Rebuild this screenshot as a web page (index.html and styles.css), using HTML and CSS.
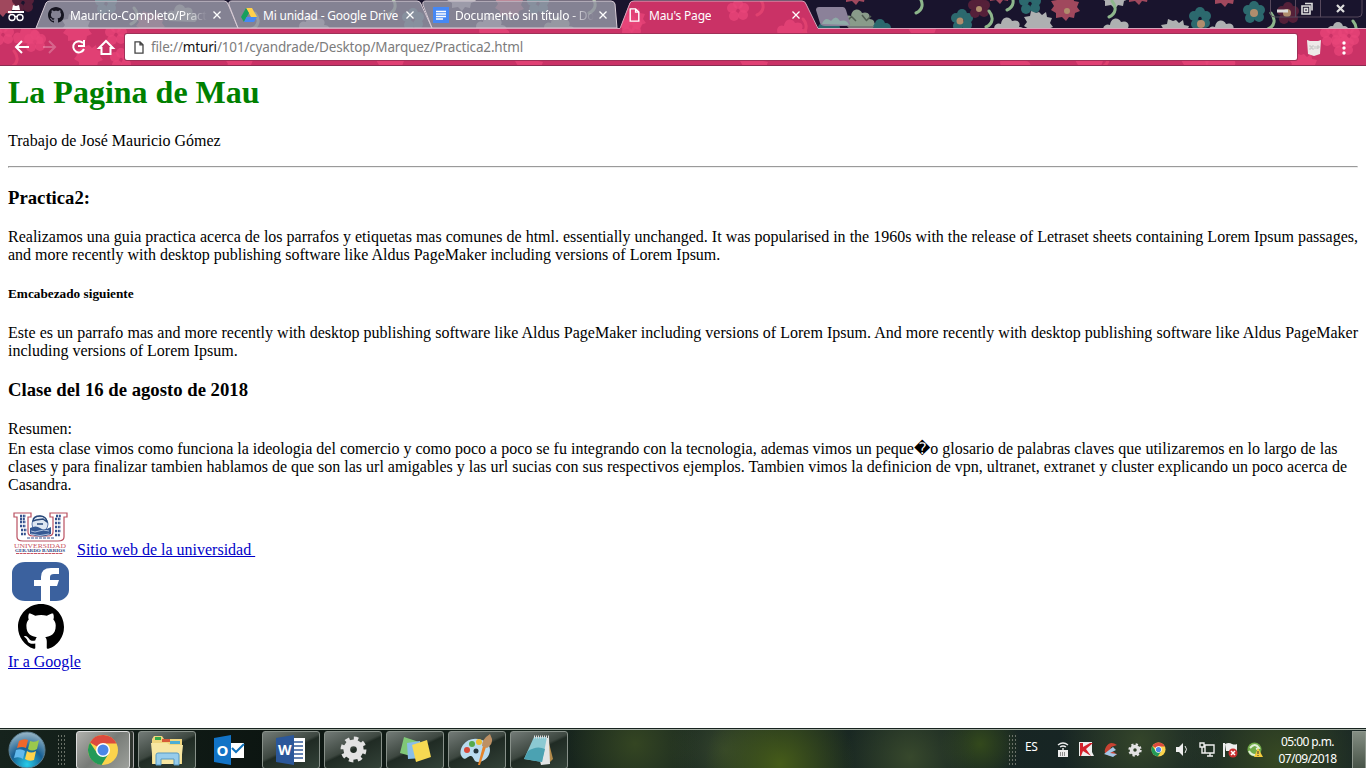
FILE: index.html
```html
<!DOCTYPE html>
<html lang="es">
<head>
<meta charset="utf-8">
<title>Mau's Page</title>
<link rel="stylesheet" href="styles.css">
</head>
<body>
<svg class="defs" aria-hidden="true">
  <defs>
    <symbol id="octocat" viewBox="0 0 16 16"><path d="M8 0C3.58 0 0 3.58 0 8c0 3.54 2.29 6.53 5.47 7.59.4.07.55-.17.55-.38 0-.19-.01-.82-.01-1.49-2.01.37-2.53-.49-2.69-.94-.09-.23-.48-.94-.82-1.13-.28-.15-.68-.52-.01-.53.63-.01 1.08.58 1.23.82.72 1.21 1.87.87 2.33.66.07-.52.28-.87.51-1.07-1.78-.2-3.64-.89-3.64-3.95 0-.87.31-1.59.82-2.15-.08-.2-.36-1.02.08-2.12 0 0 .67-.21 2.2.82.64-.18 1.32-.27 2-.27s1.36.09 2 .27c1.53-1.04 2.2-.82 2.2-.82.44 1.1.16 1.92.08 2.12.51.56.82 1.27.82 2.15 0 3.07-1.87 3.75-3.65 3.95.29.25.54.73.54 1.48 0 1.07-.01 1.93-.01 2.2 0 .21.15.46.55.38A8.01 8.01 0 0 0 16 8c0-4.42-3.58-8-8-8z"/></symbol>
    <symbol id="chrome" viewBox="0 0 32 32">
      <circle cx="16" cy="16" r="15" fill="#fbd34c"/>
      <path d="M16 16 3 8.5A15 15 0 0 1 29.5 9.500H16z" fill="#dc4b3e"/>
      <path d="M3 8.500 A15 15 0 0 0 14.500 31 L22 19 16 16 10 19z" fill="#239a58"/>
      <circle cx="16" cy="16" r="7" fill="#fff"/><circle cx="16" cy="16" r="5.500" fill="#4a86e8"/>
    </symbol>
    <symbol id="close" viewBox="0 0 8 8"><path d="M.5.5l7 7m0-7l-7 7" stroke="#fff" stroke-width="1.300"/></symbol>
    <symbol id="gear" viewBox="-12 -12 24 24"><circle r="6" fill="none" stroke="#e2e2e2" stroke-width="6"/><circle r="9.500" fill="none" stroke="#e2e2e2" stroke-width="4" stroke-dasharray="3.800 3.660"/></symbol>
    <symbol id="page" viewBox="0 0 10 13"><path d="M1 .8h5l3 3v8.400H1zM6 .8v3h3" fill="none" stroke="currentColor" stroke-width="1.300"/></symbol>
    <g id="bloom"><circle cx="-6" cy="-3" r="5"/><circle cx="0" cy="-7" r="5"/><circle cx="6" cy="-3" r="5"/><circle cx="5" cy="4" r="5"/><circle cx="-4" cy="5" r="5"/></g>
    <path id="daisy" d="M0-12l3 3 4-3 1 5 5 1-2 5 3 4-5 2-1 5-5-1-3 4-4-4-6 1v-5l-5-3 3-4-3-5 6-1 1-5 5 2z"/>
    <path id="cap" d="M-14 8c-5-8 1-12 5-10 1-8 9-8 11-3 6-2 9 2 7 6 6 0 7 5 3 8z"/>
    <path id="stem" d="M0-8C5-2 4 5-3 8" fill="none" stroke-width="3" stroke-linecap="round"/>
    <clipPath id="toolClip"><path d="M0 29H620L630 2q1-1 3-1H802q3 0 4 3L818 29H1366V65H0z"/></clipPath>
    <clipPath id="topClip"><path d="M0 0H1366V28H0z"/></clipPath>
  </defs>
</svg>

<header class="browser">
  <svg class="theme" width="1366" height="66" viewBox="0 0 1366 66">
    <path fill="#19142d" d="M0 0h1366v66H0z"/>
    <g clip-path="url(#topClip)">
      <g fill="#a0485d"><use href="#daisy" x="3" y="4"/><use href="#daisy" x="151" y="24"/><use href="#daisy" x="510" y="6"/><use href="#daisy" x="1066" y="8"/><use href="#daisy" x="1139" y="-8"/><use href="#daisy" x="856" y="-8"/><use href="#daisy" x="1000" y="-9"/><use href="#daisy" x="1225" y="-6"/></g>
      <g fill="#2c696e"><use href="#bloom" x="106" y="4"/><use href="#bloom" x="413" y="20"/><use href="#bloom" x="538" y="4"/><use href="#bloom" x="962" y="21"/><use href="#bloom" x="1200" y="19"/><use href="#bloom" x="1254" y="13"/><use href="#bloom" x="880" y="31"/><use href="#bloom" x="829" y="31"/><use href="#bloom" x="1030" y="4"/></g>
      <g fill="#552039"><use href="#bloom" x="23" y="3"/><use href="#bloom" x="979" y="8"/><use href="#bloom" x="1288" y="14"/></g>
      <g fill="#aeb0b1"><use href="#daisy" x="77" y="27"/><use href="#cap" x="315" y="24"/><use href="#cap" x="492" y="24"/><use href="#daisy" x="462" y="-2"/><use href="#cap" x="1010" y="26"/><use href="#daisy" x="1039" y="24"/><use href="#daisy" x="1115" y="-4"/><use href="#cap" x="1119" y="27"/><use href="#daisy" x="1176" y="32"/><use href="#cap" x="1224" y="29"/><use href="#bloom" x="1338" y="34"/></g>
      <g fill="#899b8a"><use href="#cap" x="860" y="18"/><use href="#cap" x="183" y="13"/><use href="#cap" x="560" y="25"/></g>
      <path d="M847 26h27l-3 5h-20z" fill="#737978"/>
      <g stroke="#8db68b"><use href="#stem" x="134" y="16"/><use href="#stem" x="255" y="21"/><use href="#stem" x="392" y="6"/><use href="#stem" x="592" y="5"/><use href="#stem" x="919" y="5"/><use href="#stem" x="989" y="19"/><use href="#stem" x="1010" y="2"/><use href="#stem" x="1112" y="9"/><use href="#stem" x="1271" y="21"/><use href="#stem" x="1353" y="29"/></g>
      <g fill="#b08d6d"><circle cx="979" cy="9" r="3"/><circle cx="960" cy="21" r="3.500"/><circle cx="1067" cy="11" r="3"/><circle cx="1201" cy="24" r="4"/><circle cx="1254" cy="13" r="4"/><circle cx="1287" cy="13" r="4"/></g>
      <path d="M847 21l5-5m-1 0 5 5m6-6 4 5m5-4-5 5" stroke="#515d52" stroke-width="1.500"/>
    </g>
    <g fill="#9997a7" fill-opacity=".84" stroke="#d9cdd7" stroke-width="1">
      <path d="M36 28L46 3q1-2 4-2H224q3 0 4 3L238 28z"/><path d="M238 28L229 5q-1-4 3-4H417q3 0 4 3L432 28z"/><path d="M432 28L423 5q-1-4 3-4H611q3 0 4 3L617 28z"/>
    </g>
    <g clip-path="url(#toolClip)">
      <path fill="#ca3266" d="M0 0h1366v66H0z"/>
      <g fill="#e8457a" fill-opacity=".75"><use href="#bloom" x="3" y="35"/><use href="#cap" x="29" y="35"/><use href="#bloom" x="35" y="42"/><use href="#daisy" x="78" y="31"/><use href="#daisy" x="89" y="57"/><use href="#bloom" x="116" y="35"/><use href="#bloom" x="121" y="60"/><use href="#daisy" x="240" y="66"/><use href="#daisy" x="391" y="67"/><use href="#cap" x="495" y="28"/><use href="#daisy" x="530" y="68"/><use href="#daisy" x="632" y="20"/><use href="#bloom" x="631" y="27"/><use href="#daisy" x="755" y="68"/><use href="#cap" x="793" y="28"/><use href="#bloom" x="738" y="11"/><use href="#daisy" x="923" y="35"/><use href="#cap" x="1016" y="60"/><use href="#daisy" x="1090" y="67"/><use href="#daisy" x="1196" y="67"/><use href="#cap" x="1221" y="58"/><use href="#daisy" x="1304" y="66"/><use href="#bloom" x="1331" y="36"/><use href="#bloom" x="1343" y="46"/><use href="#bloom" x="1349" y="36"/></g>
      <g stroke="#e0416f"><use href="#stem" x="14" y="59"/><use href="#stem" x="760" y="7"/><use href="#stem" x="803" y="27"/><use href="#stem" x="1105" y="59"/></g>
    </g>
    <path d="M0 28.500H620L630 3q1-2 4-2H802q3 0 4 3L818 28.500H1366" fill="none" stroke="#d7a6bb"/>
    <path d="M816 10q0-3 3-3h24q2 0 3 3l4 13q1 3-3 3h-22q-4 0-5-3z" fill="#8b8199"/><path d="M822 24q3-8 9-3 5-7 9 0 7-2 9 4z" fill="#8faaa7"/>
    <path d="M0 65.500h1366" stroke="#8b2d51"/>
    <g fill="none" stroke="#57495d"><path d="M1270.500 0v13q0 4 4 4H1358q4 0 4-4V0M1295.500 0v17M1320.500 0v17"/></g>
    <path d="M1277 11h11" stroke="#ddd" stroke-width="3"/><path d="M1302 6h8v8h-8zM1304.500 8.500h3v3h-3zM1305 3.500h7v7" fill="none" stroke="#ddd" stroke-width="1.600"/>
    <path d="M1337 5l7 7m0-7l-7 7" stroke="#ddd" stroke-width="2.200"/>
  </svg>
  <div class="tabs">
    <svg class="incognito" width="16" height="18" viewBox="0 0 16 18"><path d="M4 6l1-5 3 1 3-1 1 5zM0 7h16v2H0z" fill="#fff"/><g fill="none" stroke="#fff" stroke-width="1.400"><circle cx="4" cy="13.500" r="3"/><circle cx="12" cy="13.500" r="3"/><path d="M7 13q1-1 2 0"/></g></svg>
    <div class="tab t1"><svg width="16" height="16" fill="#161521"><use href="#octocat"/></svg><span class="label fade">Mauricio-Completo/Pract</span><svg class="x" width="8" height="8"><use href="#close"/></svg></div>
    <div class="tab t2"><svg width="16" height="16" viewBox="0 0 16 16"><path d="M5 1h6l5 9h-6z" fill="#ffd04b"/><path d="M5 1l3 5-5 9-3-5z" fill="#17a05d"/><path d="M5.500 10H16l-3 5H3z" fill="#4688f4"/></svg><span class="label">Mi unidad - Google Drive</span><svg class="x" width="8" height="8"><use href="#close"/></svg></div>
    <div class="tab t3"><svg width="16" height="16" viewBox="0 0 16 16"><path fill="#4688f4" d="M0 0h16v16H0z"/><path d="M3 4.500h10M3 7h10M3 9.500h10M3 12h7" stroke="#fff" stroke-width="1.300"/></svg><span class="label fade">Documento sin título - Do</span><svg class="x" width="8" height="8"><use href="#close"/></svg></div>
    <div class="tab t4"><svg width="11" height="14"><use href="#page"/></svg><span class="label">Mau's Page</span><svg class="x" width="8" height="8"><use href="#close"/></svg></div>
  </div>
  <div class="toolbar">
    <svg class="nav" width="102" height="20" viewBox="0 0 102 20" fill="none" stroke="#fff" stroke-width="2"><path d="M15 9H2m6-6L2 9l6 6"/><path d="M29 9h12m-6-6l6 6-6 6" opacity=".25"/><path d="M69 5a5.600 5.600 0 1 0 1 6M70 2v6h-6"/><path d="M85 10l7-7 7 7h-2.500v6h-9v-6z"/></svg>
    <div class="address"><svg width="10" height="13"><use href="#page"/></svg><span class="url">file://<b>mturi</b>/101/cyandrade/Desktop/Marquez/Practica2.html</span></div>
    <svg class="ext" width="14" height="17" viewBox="0 0 14 17"><path d="M0 1l3 1h8l3-1-1 14-6 2-6-2z" fill="#ede9e8"/><path d="M2 7h2v3H2m5-3H5v3h2m1-3v3m2 0V7h2v2h-2" fill="none" stroke="#bbb" stroke-width=".8"/></svg>
    <svg class="menu" width="4" height="14" fill="#fff"><circle cx="2" cy="2" r="1.700"/><circle cx="2" cy="7" r="1.700"/><circle cx="2" cy="12" r="1.700"/></svg>
  </div>
</header>

<main class="page">
  <h1>La Pagina de Mau</h1>
  <p>Trabajo de José Mauricio Gómez</p>
  <hr>
  <h3>Practica2:</h3>
  <p class="justified">Realizamos una guia practica acerca de los parrafos y etiquetas mas comunes de html. essentially unchanged. It was popularised in the 1960s with the release of Letraset sheets containing Lorem Ipsum passages, and more recently with desktop publishing software like Aldus PageMaker including versions of Lorem Ipsum.</p>
  <h5>Emcabezado siguiente</h5>
  <p class="justified">Este es un parrafo mas and more recently with desktop publishing software like Aldus PageMaker including versions of Lorem Ipsum. And more recently with desktop publishing software like Aldus PageMaker including versions of Lorem Ipsum.</p>
  <h3>Clase del 16 de agosto de 2018</h3>
  <p class="summary">Resumen:</p>
  <p class="body">En esta clase vimos como funciona la ideologia del comercio y como poco a poco se fu integrando con la tecnologia, ademas vimos un peque&#xFFFD;o glosario de palabras claves que utilizaremos en lo largo de las clases y para finalizar tambien hablamos de que son las url amigables y las url sucias con sus respectivos ejemplos. Tambien vimos la definicion de vpn, ultranet, extranet y cluster explicando un poco acerca de Casandra.</p>
  <div class="links">
    <div class="site">
      <svg width="65" height="46" viewBox="0 0 65 46">
        <path d="M6 4h17v4h-3v15q0 4 5 4h15q5 0 5-4V8h-3V4h17v4h-3v20q0 4-6 4H15q-6 0-6-4V8H6z" fill="#fff" stroke="#ba5060" stroke-width="1.200"/>
        <path d="M12 7h6M12 10h5M12 13h6M12 17h6M13 21h6M13 25h5M48 7h5M47 10h6M47 14h6M47 18h6M47 22h6M47 26h5" stroke="#35518e" stroke-width="2.600" stroke-dasharray="2 .8"/>
        <circle cx="32" cy="15" r="8" fill="#dfe7f2" stroke="#5c77ac"/><path d="M22 19q6-3 10 0t11-1v7q-10 5-21 0z" fill="#365993"/><path d="M25 12q0-5 7-5 6 0 7 6l-4-3-7 1zm4 3h6" fill="none" stroke="#294879" stroke-width="1.400"/><path d="M23 22q4 2 8 0t10 0m-18 3q9 3 18 0" fill="none" stroke="#adc0dc"/><path d="M19 29h27" stroke="#35518e" stroke-dasharray="3 1"/>
        <text x="6" y="39" textLength="52" lengthAdjust="spacingAndGlyphs" fill="#c85361" font-size="5.500">UNIVERSIDAD</text><text x="7" y="43" textLength="50" lengthAdjust="spacingAndGlyphs" fill="#263f82" font-size="5" font-weight="bold">GERARDO BARRIOS</text><path d="M8 44.500h47" stroke="#c85361" stroke-dasharray="3 .6"/>
      </svg><a href="#">Sitio web de la universidad&nbsp;</a>
    </div>
    <svg class="facebook" width="57" height="40" viewBox="0 0 57 40"><rect width="57" height="39" rx="13" ry="11" fill="#3b619e"/><path d="M29 39V24h-7v-6h7v-3Q29 6 39 6h8v6h-5q-4 0-4 3v3h9l-2 6h-7v15z" fill="#fff"/></svg>
    <svg class="github" width="46" height="46"><use href="#octocat"/></svg>
    <a class="google" href="#">Ir a Google</a>
  </div>
</main>

<footer class="taskbar">
  <svg class="start" width="40" height="38" viewBox="0 0 40 38"><defs><radialGradient id="orb" cx=".5" cy=".9" r=".9"><stop stop-color="#27cce9"/><stop offset=".5" stop-color="#175f93"/><stop offset="1" stop-color="#9cb8c7"/></radialGradient></defs><circle cx="20" cy="19" r="18" fill="url(#orb)" stroke="#5b7e91"/><path d="M12 10q5-3 9-1l-2 8q-4-2-9 0z" fill="#f0672a"/><path d="M23 10q5 2 9-1l-2 9q-5 3-9 0z" fill="#9bc84c"/><path d="M9 19q5-2 9 1l-2 8q-4-3-9-1z" fill="#61b9ed"/><path d="M20 20q4 3 9 0l-2 9q-5 2-9-1z" fill="#ffd34b"/></svg>
  <i class="grip"></i>
  <div class="apps">
    <div class="app active"><svg width="32" height="32"><use href="#chrome"/></svg></div>
    <div class="app"><svg width="34" height="32" viewBox="0 0 34 32"><path d="M2 5l2-3h8l2 3 18 0v25H2z" fill="#efd57e"/><path d="M5 3h6v3H5z" fill="#37a849"/><path d="M12 5h8v3h-8z" fill="#d65b38"/><path d="M20 7h10v3H20z" fill="#4baed5"/><path d="M1 9h16l3 2h13l-2 19H3z" fill="#f7e6a2"/><path d="M6 31V21q0-2 2-2h19q2 0 2 2v10h-5v-6H11v6z" fill="#96cceb" stroke="#5799c2"/></svg></div>
    <div class="app plain"><svg width="32" height="32" viewBox="0 0 32 32"><path d="M16 9h15v15H16z" fill="#fff"/><path d="M19 14l4 4 8-8" fill="none" stroke="#0f71bb" stroke-width="2"/><path d="M1 4l17-3v30L1 28z" fill="#1273c6"/><text x="3.500" y="21.500" fill="#fff" font-size="15" font-weight="bold">O</text></svg></div>
    <div class="app"><svg width="32" height="32" viewBox="0 0 32 32"><path d="M15 4h15v24H15z" fill="#fff"/><path d="M17 8h11m-11 4h11m-11 4h11m-11 4h11m-11 4h11" stroke="#345b9a" stroke-width="1.500"/><path d="M1 4l18-3v30L1 28z" fill="#2b579a"/><text x="3" y="21" fill="#fff" font-size="14" font-weight="bold">W</text></svg></div>
    <div class="app"><svg width="27" height="27"><use href="#gear"/></svg></div>
    <div class="app"><svg width="34" height="30" viewBox="0 0 34 30"><path d="M6 2l15 5-5 15-14-4z" fill="#80c878"/><path d="M9 8l13-2 3 17-15 1z" fill="#89bee9"/><path d="M14 10l15-5 4 17-15 5z" fill="#f7d952"/></svg></div>
    <div class="app"><svg width="34" height="34" viewBox="0 0 34 34"><path d="M3 12Q10 3 22 7c13 4 9 21-4 22-5 0-4-7-8-6-3 1-5 5-8 1s-1-9 1-12z" fill="#b9dbef"/><circle cx="7" cy="17" r="3" fill="#d74839"/><circle cx="12" cy="11" r="3" fill="#55a94a"/><circle cx="19" cy="9" r="3" fill="#edbd34"/><circle cx="16" cy="18" r="2.500" fill="#24353b"/><path d="M18 32l5-19 3 1-6 18z" fill="#e4842b"/><path d="M22 13q0-7 8-12l2 5q1 5-5 9z" fill="#bd9064"/></svg></div>
    <div class="app"><svg width="34" height="32" viewBox="0 0 34 32"><path d="M26 5l5 20-4 4" fill="#b48b4b"/><path d="M12 3l15 1 1 26-9 1z" fill="#e2e5e5"/><path d="M12 3h13l-5 25-18-3z" fill="#8cc9d2"/><path d="M6 17q9-6 17-2l-3 13-18-3z" fill="#4ba2b2"/><path d="M12 3h15" stroke="#ddd" stroke-width="3" stroke-dasharray="1 1"/></svg></div>
  </div>
  <i class="grip right"></i>
  <span class="lang">ES</span>
  <div class="tray">
    <svg width="14" height="16" viewBox="0 0 14 16"><path d="M2 8h10v7H2z" fill="#eee"/><path d="M4 11h1m1 0h1m1 0h1M4 13h1m1 0h1m1 0h1" stroke="#333"/><path d="M2 3q5-4 10 0M4 5q3-2 6 0M7 6v2" fill="none" stroke="#eee" stroke-width="1.400"/></svg>
    <svg width="15" height="15" viewBox="0 0 15 15"><path fill="#eee" d="M0 0h13v10l2 4H0z"/><path d="M1 1h3v4l7-4h3L7 7l5 7-8-5-2 5H1z" fill="#d3202a"/></svg>
    <svg width="17" height="16" viewBox="0 0 17 16"><path d="M14 3Q7-2 3 5t4 9l7-1-3-3-4-1 1-4z" fill="#c84232"/><path d="M1 12l9-7 3 3-6 3 7 1-4 3z" fill="#a5c8e7"/></svg>
    <svg width="14" height="14"><use href="#gear"/></svg>
    <svg width="15" height="15"><use href="#chrome"/></svg>
    <svg width="15" height="15" viewBox="0 0 15 15"><path d="M1 5h3l4-4v13l-4-4H1z" fill="#eee"/><path d="M10 4q3 3 0 7" fill="none" stroke="#eee"/></svg>
    <svg width="16" height="15" viewBox="0 0 16 15" fill="none" stroke="#eee" stroke-width="1.400"><path d="M6 3h9v8H6zM8 14h6M11 11v3M1 1h4v4H1zM3 5v6h3"/></svg>
    <svg width="15" height="16" viewBox="0 0 15 16"><path d="M1 1v14" stroke="#eee" stroke-width="2"/><path d="M2 2q4-2 7 0 3 1 5 0v7H3z" fill="#eee"/><circle cx="10" cy="11" r="4.500" fill="#c92f2f"/><path d="M8 9l4 4m0-4l-4 4" stroke="#fff" stroke-width="1.500"/></svg>
    <svg width="16" height="16" viewBox="0 0 16 16"><circle cx="7.500" cy="7.500" r="7" fill="#70aa48"/><path d="M3 6q5-6 9 0l-3 1m-7 2q2 4 6 4" fill="none" stroke="#e1efd7" stroke-width="2"/><path d="M11 6l5 9H7z" fill="#f4cb3d"/><path d="M11 9v3m0 1v1" stroke="#333"/></svg>
  </div>
  <div class="clock"><span>05:00 p.m.</span><span>07/09/2018</span></div>
  <i class="desktop"></i>
</footer>
</body>
</html>
```
FILE: styles.css
```css
* { box-sizing: border-box; }
body { margin: 0; width: 1366px; height: 768px; overflow: hidden; display: flex; flex-direction: column; background: #fff; color: #000; font: 16px "Liberation Serif", "DejaVu Sans", serif; }
svg { display: block; flex: none; }
.defs { position: absolute; width: 0; height: 0; }
.browser { position: relative; height: 66px; flex: none; font-family: "Noto Sans", sans-serif; }
.theme { position: absolute; inset: 0; z-index: -1; }
.tabs { display: flex; height: 29px; padding-left: 8px; align-items: center; }
.incognito { margin: -3px 24px 0 0; }
.tab { display: flex; align-items: center; height: 29px; padding-top: 1px; color: #fff; font-size: 12px; }
.label { margin-left: 6px; white-space: nowrap; overflow: hidden; letter-spacing: -.2px; }
.fade { mask-image: linear-gradient(90deg, #000 82%, transparent); }
.x { margin-left: auto; }
.t1 { width: 173px; }
.t2 { width: 173px; margin-left: 20px; }
.t3 { width: 174px; margin-left: 19px; }
.t4 { width: 171px; margin-left: 22px; }
.t4 .label { margin-left: 9px; }
.toolbar { display: flex; height: 37px; align-items: center; padding: 0 18px 0 14px; }
.nav { margin-right: 9px; }
.address { display: flex; width: 1172px; height: 26px; margin-top: -1px; align-items: center; padding-left: 9px; background: #fff; border-radius: 2px; color: #444; box-shadow: 0 0 0 1px #9f3158; }
.url { margin-left: 7px; font-size: 13.500px; letter-spacing: -.16px; color: #7c7c7c; white-space: nowrap; }
.url b { font-weight: 400; color: #111; }
.ext { margin-left: 10px; }
.menu { margin-left: 21px; }
.page { flex: 1; padding: 8px; min-height: 0; }
h1 { margin: 0; font-size: 32px; line-height: 37px; color: green; }
p { margin: 16px 0; line-height: 18px; }
h1 + p { margin-top: 21px; }
hr { margin: 0; }
h3 { font-size: 18.720px; line-height: 21px; margin: 19px 0 20px; }
h5 { font-size: 13.280px; line-height: 15px; margin: 22px 0 23px; }
.justified { text-align: justify; }
.summary { margin: 0 0 2px; }
.body { margin: 0; }
.links { display: flex; flex-direction: column; align-items: flex-start; padding-top: 15px; }
.links a { color: #0000c8; text-decoration: underline; }
.site { display: flex; align-items: flex-end; gap: 4px; height: 50px; line-height: 18px; }
.site svg { margin-bottom: 4px; }
.facebook { margin: 3px 0 0 4px; }
.github { margin: 2px 0 0 10px; }
.google { margin-top: 3px; line-height: 18px; }
.taskbar { display: flex; height: 40px; flex: none; align-items: center; padding: 2px 0 0 7px; color: #fff; font-family: "Noto Sans", sans-serif; border-top: 1px solid #17231f; box-shadow: inset 0 1px #a6b0a6; background: radial-gradient(circle at 635px 15px, #344522, transparent 65px), radial-gradient(circle at 780px 35px, #465c19, transparent 75px), radial-gradient(circle at 725px 20px, #34442c, transparent 55px), radial-gradient(circle at 910px 28px, #37482c, transparent 65px), radial-gradient(circle at 980px 15px, #33491c, transparent 40px), radial-gradient(circle at 1140px 12px, #34452a, transparent 80px), radial-gradient(circle at 1280px 28px, #374923, transparent 100px), linear-gradient(90deg, #16231d, #0c1511 20%, #1b2a21 48%, #142126); }
.grip { width: 8px; height: 31px; margin: 0 11px 0 10px; background: radial-gradient(circle, #697067 .7px, transparent 1px) 0 0 / 3px 4px; }
.apps { display: flex; gap: 4px; }
.app { display: flex; width: 58px; height: 38px; align-items: center; justify-content: center; border: 1px solid #879089; border-radius: 3px; background: linear-gradient(155deg, #737b77 0, #3d4740 45%, #202b24 50%, #334238 100%); }
.active { width: 54px; margin-right: 4px; border-color: #ddd; background: linear-gradient(135deg, #b1b1ad, #777b77 50%, #9da09b); box-shadow: 3px 0 #303630, 4px 0 #aaa; }
.plain { border-color: transparent; background: none; }
.right { margin: 0 0 0 auto; }
.lang { width: 31px; margin: -6px 0 0 9px; font-size: 12px; letter-spacing: -.5px; }
.tray { display: flex; width: 207px; justify-content: space-between; align-items: center; }
.clock { display: flex; flex-direction: column; width: 89px; align-items: center; font-size: 12px; line-height: 17px; letter-spacing: -.6px; }
.desktop { width: 14px; height: 38px; border: 1px solid #8e978d; background: linear-gradient(#838d82, #485448); }
```
